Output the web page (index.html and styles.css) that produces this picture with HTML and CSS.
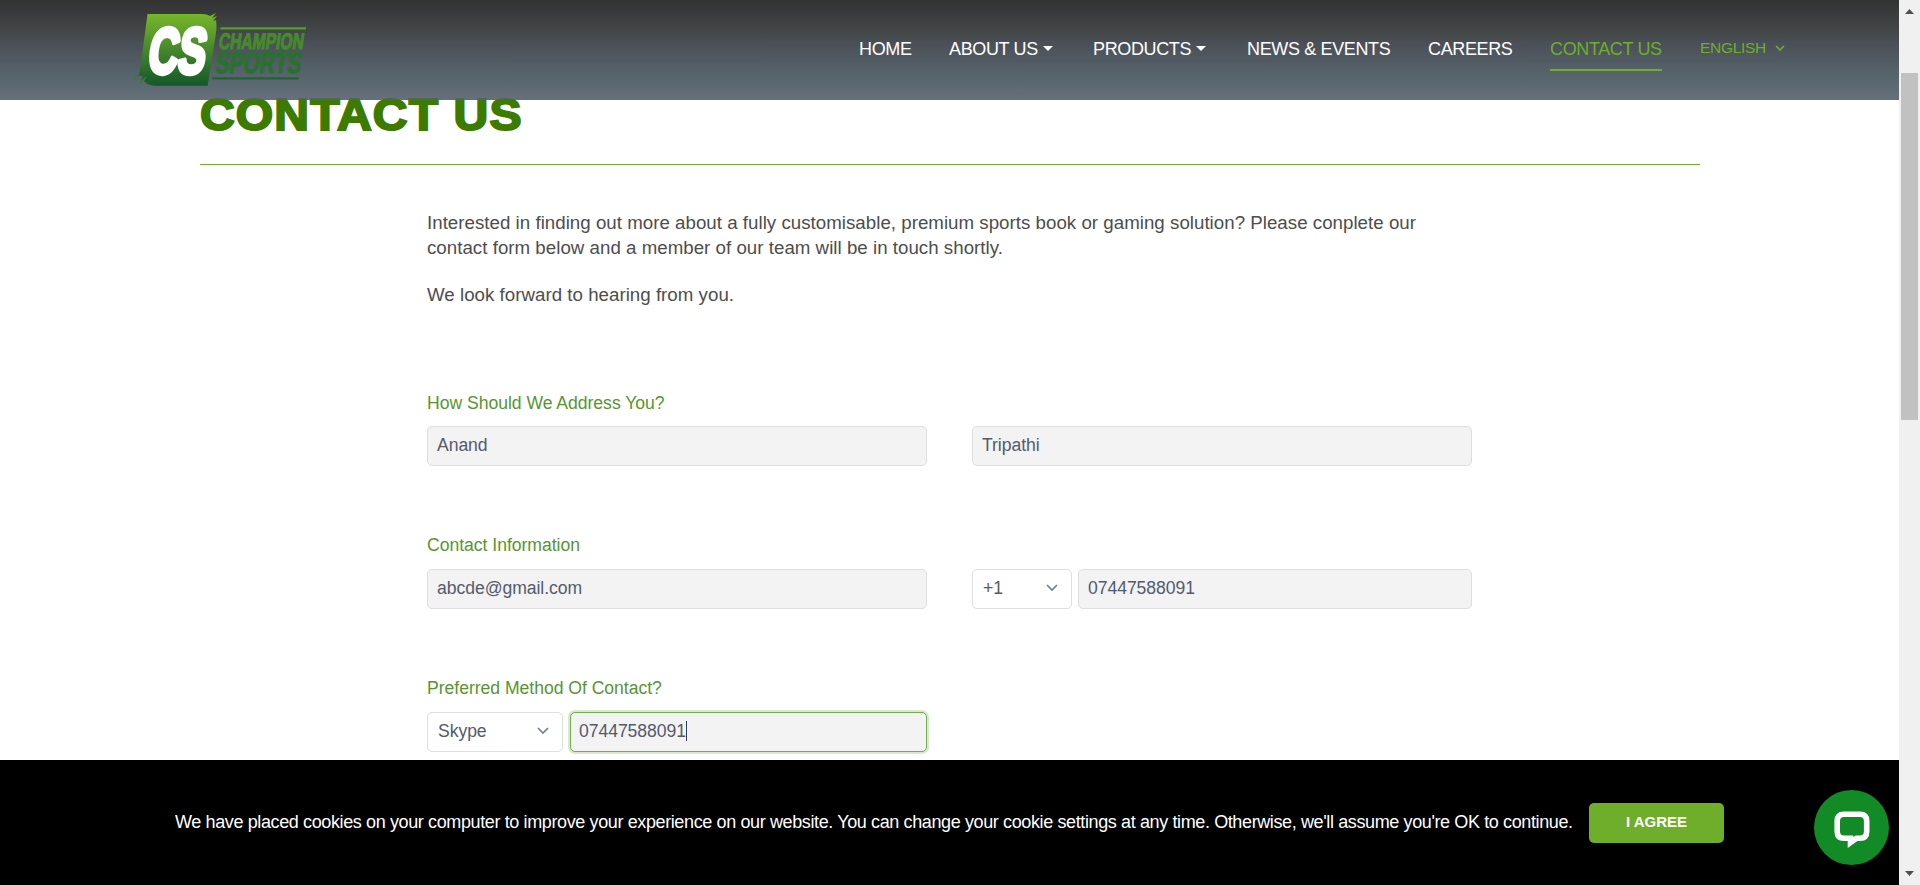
FILE: index.html
```html
<!DOCTYPE html>
<html lang="en">
<head>
<meta charset="utf-8">
<title>Champion Sports - Contact Us</title>
<link rel="stylesheet" href="styles.css">
</head>
<body>
<div class="window">
  <div class="page">
    <header class="header">
      <svg class="logo" viewBox="0 0 190 100" aria-label="Champion Sports">
        <defs>
          <linearGradient id="badge" x1="0" y1="0" x2="0" y2="1"><stop offset="0" stop-color="#78b82b"/><stop offset="1" stop-color="#14582b"/></linearGradient>
          <linearGradient id="word" gradientUnits="userSpaceOnUse" x1="0" y1="26" x2="0" y2="80"><stop offset="0" stop-color="#5a9e2a"/><stop offset="1" stop-color="#1c642e"/></linearGradient>
        </defs>
        <path fill="url(#badge)" d="M17.500 14H72Q77 14 80 16L86 13L82 18L87 16L83 21L86 20Q87 28 86 33L77.700 85.700H25Q18 85.500 14 81L17 76L11 80L13 76L8 76L10 70Z"/>
        <path stroke="#2b7a2e" d="M4 79l6-5M10 83l6-6"/>
        <text class="logo-cs" transform="translate(16.500 72.500) skewX(-8)" textLength="57" lengthAdjust="spacingAndGlyphs">CS</text>
        <g fill="url(#word)">
          <path d="M90.500 27.300H176V29.500H90Z"/>
          <path d="M82.500 77.300H169L168.500 79.500H82Z"/>
          <text class="logo-word" fill="#47892d" stroke="#47892d" font-size="22.500" transform="translate(88 49) skewX(-8)" textLength="85" lengthAdjust="spacingAndGlyphs">CHAMPION</text>
          <text class="logo-word" fill="#297130" stroke="#297130" font-size="29.500" transform="translate(84.300 73.300) skewX(-8)" textLength="86" lengthAdjust="spacingAndGlyphs">SPORTS</text>
        </g>
      </svg>
      <nav class="nav">
        <a>HOME</a>
        <a>ABOUT US<i class="caret-down"></i></a>
        <a>PRODUCTS<i class="caret-down"></i></a>
        <a>NEWS &amp; EVENTS</a>
        <a>CAREERS</a>
        <a class="active">CONTACT US</a>
        <a class="lang">ENGLISH<svg width="10" height="6" viewBox="0 0 10 6"><path d="M1 1l4 4 4-4"/></svg></a>
      </nav>
    </header>
    <main class="main">
      <h1 class="title"><span>CONTACT US</span></h1>
      <div class="content">
        <p class="intro">Interested in finding out more about a fully customisable, premium sports book or gaming solution? Please conplete our<br>contact form below and a member of our team will be in touch shortly.</p>
        <p class="intro">We look forward to hearing from you.</p>
        <form class="form">
          <section class="group">
            <label class="label first">How Should We Address You?</label>
            <div class="row">
              <input class="field" value="Anand">
              <input class="field" value="Tripathi">
            </div>
          </section>
          <section class="group">
            <label class="label">Contact Information</label>
            <div class="row">
              <input class="field" value="abcde@gmail.com">
              <div class="phone">
                <div class="select">+1<svg width="12" height="8" viewBox="0 0 12 8"><path d="M1 1l5 5 5-5"/></svg></div>
                <input class="field" value="07447588091">
              </div>
            </div>
          </section>
          <section class="group">
            <label class="label">Preferred Method Of Contact?</label>
            <div class="row">
              <div class="method">
                <div class="select">Skype<svg width="12" height="8" viewBox="0 0 12 8"><path d="M1 1l5 5 5-5"/></svg></div>
                <div class="field focused">07447588091<i class="cursor"></i></div>
              </div>
            </div>
          </section>
        </form>
      </div>
    </main>
    <footer class="cookies">
      <p class="cookie-text">We have placed cookies on your computer to improve your experience on our website. You can change your cookie settings at any time. Otherwise, we'll assume you're OK to continue.</p>
      <button class="agree">I AGREE</button>
      <div class="chat">
        <svg width="75" height="75" viewBox="0 0 75 75"><path d="M30 24.300H46Q52.700 24.300 52.700 31V41.500Q52.700 48.200 46 48.200H42.500L36.500 52.500V48.200H30Q23.200 48.200 23.200 41.500V31Q23.200 24.300 30 24.300Z" fill="none" stroke="#fff" stroke-width="5.600"/></svg>
      </div>
    </footer>
  </div>
  <aside class="scrollbar">
    <svg width="9" height="5" viewBox="0 0 9 5"><path d="M0 5l4.500-5L9 5z"/></svg>
    <div class="track"><div class="thumb"></div></div>
    <svg width="9" height="5" viewBox="0 0 9 5"><path d="M0 0l4.500 5L9 0z"/></svg>
  </aside>
</div>
</body>
</html>
```
FILE: styles.css
```css
* { box-sizing: border-box; }
body { margin: 0; font-family: "Liberation Sans", Arial, sans-serif; background: #fff; overflow: hidden; }
.window { display: flex; width: 1920px; height: 885px; }
.page { display: flex; flex-direction: column; width: 1899px; }
.header {
  display: flex; flex: none; height: 100px; padding-left: 130px; position: relative; z-index: 1;
  background: linear-gradient(rgba(28, 28, 28, .9), rgba(48, 53, 54, .9) 34%, rgba(55, 60, 69, .9) 43%, rgba(68, 81, 89, .9) 72%, rgba(84, 97, 109, .9));
}
.logo { flex: none; width: 190px; height: 100px; overflow: visible; }
.logo-cs { font-size: 64px; font-weight: bold; fill: #fff; stroke: #fff; stroke-width: 5; stroke-linejoin: round; }
.logo-word { font-weight: bold; stroke-width: 1.2; }
.nav {
  display: grid; grid-template-columns: 90px 144px 153px 181px 122px 150px 100px;
  align-items: start; padding-left: 539px; padding-top: 36px;
}
.nav a { justify-self: start; height: 35px; font-size: 18px; line-height: 26px; letter-spacing: -.36px; color: #fff; white-space: nowrap; }
.nav a:nth-child(n+4) { margin-left: 1px; }
.nav .active { color: #6eae2b; border-bottom: 2px solid #6eae2b; }
.nav .lang { font-size: 15.5px; line-height: 24px; letter-spacing: -.3px; color: #6eae2b; }
.lang svg { margin-left: 9px; vertical-align: 2px; }
.lang path { fill: none; stroke: #6eae2b; stroke-width: 1.6; }
.caret-down { display: inline-block; margin-left: 5px; vertical-align: 4px; border: 5px solid transparent; border-top-color: #fff; border-bottom: 0; }
.main { flex: 1; min-height: 0; overflow: visible; }
.title {
  width: 1500px; height: 73px; margin: -8px 0 0 200px; border-bottom: 1px solid #6eae2b;
  font-size: 44px; line-height: 45px; font-weight: bold; letter-spacing: 1px; color: #3c7a00;
}
.title span { display: inline-block; transform: scaleX(1.093); transform-origin: left; -webkit-text-stroke: 2px #3c7a00; }
.content { width: 1045px; margin-left: 427px; padding-top: 45px; }
.intro { margin: 0 0 22px; font-size: 18.7px; line-height: 25px; letter-spacing: .027px; color: #4d4d4d; white-space: nowrap; }
.form { padding-top: 61px; }
.group { height: 143px; }
.label { display: block; height: 36px; font-size: 17.6px; line-height: 24px; letter-spacing: -.03px; color: #589532; }
.label.first { padding-top: 1px; }
.row { display: grid; grid-template-columns: 500px 500px; gap: 45px; }
.field, .select {
  height: 40px; padding: 0 9px; border: 1px solid #dcdee0; border-radius: 5px;
  font: 17.6px/36px "Liberation Sans", Arial, sans-serif; color: #535b6b; outline: 0; min-width: 0; letter-spacing: -.06px;
}
.field { width: 100%; background: #f3f3f3; }
input.field { padding-bottom: 2px; }
.select { display: flex; align-items: center; justify-content: space-between; padding: 0 13px 2px 10px; background: #fff; }
.select path { fill: none; stroke: #75808e; stroke-width: 1.7; }
.phone { display: grid; grid-template-columns: 100px 394px; gap: 6px; }
.method { display: grid; grid-template-columns: 136px 357px; gap: 7px; }
.field.focused { border-color: #74aa50; box-shadow: 0 0 0 2px #d8e9cc; padding-left: 8px; }
.cursor { display: inline-block; width: 1px; height: 20px; vertical-align: -4px; background: #333c50; }
.cookies { display: flex; flex: none; align-items: center; position: relative; z-index: 1; height: 125px; padding-left: 175px; background: #000; }
.cookie-text { width: 1414px; margin: 0; font-size: 18px; letter-spacing: -.38px; white-space: nowrap; color: #fff; }
.agree { width: 135px; height: 40px; padding: 0 0 3px; border: 0; border-radius: 5px; background: #6eae2b; color: #fff; font: bold 15px "Liberation Sans", Arial, sans-serif; }
.chat { width: 75px; height: 75px; margin: 10px 0 0 90px; border-radius: 50%; background: #128a25; }
.chat svg { display: block; }
.scrollbar { display: flex; flex-direction: column; align-items: center; width: 21px; padding: 9px 0; background: #f0f0f0; }
.scrollbar svg { fill: #4f4f4f; flex: none; }
.track { flex: 1; padding-top: 59px; }
.thumb { width: 17px; height: 347px; background: #c1c1c1; }
```
